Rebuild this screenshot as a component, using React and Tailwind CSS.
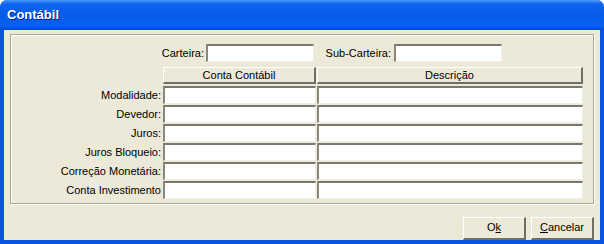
import { Fragment } from "react";

const rows = [
  "Modalidade:",
  "Devedor:",
  "Juros:",
  "Juros Bloqueio:",
  "Correção Monetária:",
  "Conta Investimento",
];

const Field = ({ className = "" }) => (
  <div
    className={`bg-white border-t-2 border-l-2 border-b border-r border-t-[#7a786e] border-l-[#8a887e] border-b-[#f1efe2] border-r-[#f1efe2] ${className}`}
  />
);

const HeaderCell = ({ children }) => (
  <div className="h-[17px] flex items-center justify-center bg-[#ece9d8] border-t border-l border-t-white border-l-white border-b-2 border-r-2 border-b-[#716f64] border-r-[#716f64] leading-none">
    {children}
  </div>
);

const Button = ({ children }) => (
  <button className="w-[63px] h-[23px] bg-[#ece9d8] border-t border-l border-t-white border-l-white border-b-2 border-r-2 border-b-[#716f64] border-r-[#716f64] text-[11px] text-black leading-none pb-[2px]">
    {children}
  </button>
);

export default function App() {
  return (
    <div
      className="w-[604px] h-[244px] overflow-hidden flex flex-col bg-[#0a55e0] rounded-t-[7px] text-[11px] text-black"
      style={{ fontFamily: '"Liberation Sans", Arial, sans-serif' }}
    >
      <div className="h-[30px] shrink-0 flex items-center pl-[7px] pb-[1px] rounded-t-[7px] bg-[linear-gradient(to_bottom,#4a98fc_0%,#0d63ee_14%,#065ce9_50%,#0a60ee_85%,#0349d4_100%)]">
        <span className="text-white font-bold text-[13px] [text-shadow:1px_1px_0_#0a1e8c]">Contábil</span>
      </div>
      <div className="flex-1 mx-[4px] mb-[4px] bg-[#ece9d8] overflow-hidden flex flex-col">
        <div className="mt-[4px] mx-[6px] h-[173px] border border-[#aca899] shadow-[inset_1px_1px_0_#fff,1px_1px_0_#fff]">
          <div className="mt-[9px] flex items-center h-[18px]">
            <span className="w-[195px] text-right pr-[2px]">Carteira:</span>
            <Field className="w-[108px] h-[18px]" />
            <span className="w-[80px] text-right pr-[3px]">Sub-Carteira:</span>
            <Field className="w-[108px] h-[18px]" />
          </div>
          <div className="mt-[5px] grid grid-cols-[152px_153px_1px_266px] gap-y-[1px] auto-rows-[18px]">
            <div className="h-[17px]" />
            <HeaderCell>Conta Contábil</HeaderCell>
            <div />
            <HeaderCell>Descrição</HeaderCell>
            {rows.map((label) => (
              <Fragment key={label}>
                <div className="flex items-center justify-end pr-[2px] leading-none">{label}</div>
                <Field />
                <div />
                <Field />
              </Fragment>
            ))}
          </div>
        </div>
        <div className="mt-[13px] flex justify-end gap-[5px] pr-[6px]">
          <Button>
            O<span className="underline">k</span>
          </Button>
          <Button>
            <span className="underline">C</span>ancelar
          </Button>
        </div>
      </div>
    </div>
  );
}
